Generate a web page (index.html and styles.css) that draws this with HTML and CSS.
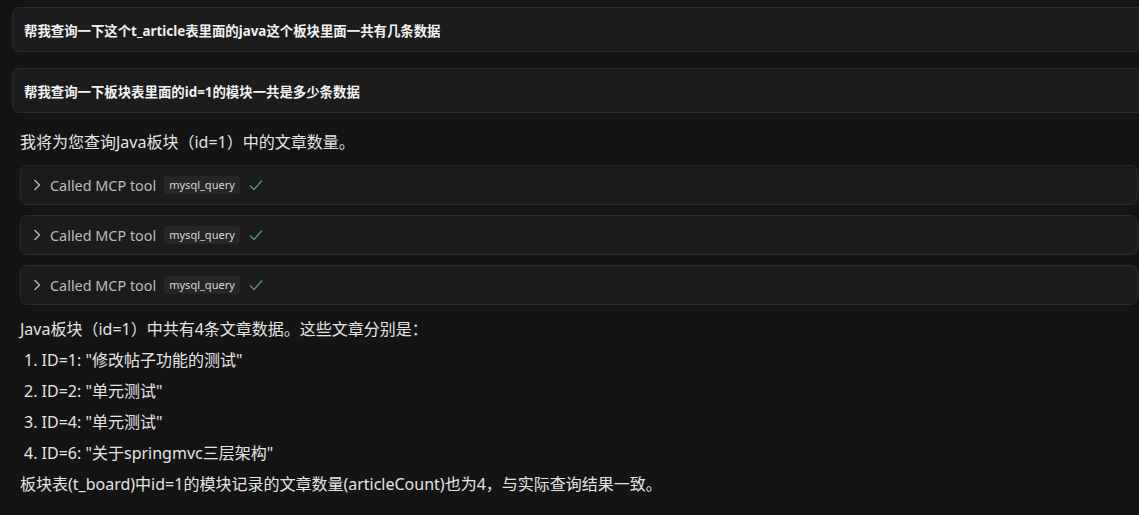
FILE: index.html
```html
<!DOCTYPE html>
<html lang="zh-CN">
<head>
    <meta charset="UTF-8">
    <meta name="viewport" content="width=device-width, initial-scale=1.0">
    <title>Chat</title>
    <link rel="stylesheet" href="styles.css">
</head>
<body>

<div class="chat">
    <div class="user-msg">帮我查询一下这个t_article表里面的java这个板块里面一共有几条数据</div>
    <div class="user-msg">帮我查询一下板块表里面的id=1的模块一共是多少条数据</div>

    <p class="reply intro">我将为您查询Java板块（id=1）中的文章数量。</p>

    <div class="tools">
        <div class="tool-call">
            <svg class="chevron" width="8" height="12" viewBox="0 0 8 12"><path d="M1.5 1 L6.5 6 L1.5 11" fill="none" stroke="currentColor" stroke-width="1.3"/></svg>
            <span class="tool-label">Called MCP tool</span>
            <span class="tool-name">mysql_query</span>
            <svg class="check" width="14" height="12" viewBox="0 0 14 12"><path d="M1 6.5 L5 10.5 L13 1.5" fill="none" stroke="currentColor" stroke-width="1.3"/></svg>
        </div>
        <div class="tool-call">
            <svg class="chevron" width="8" height="12" viewBox="0 0 8 12"><path d="M1.5 1 L6.5 6 L1.5 11" fill="none" stroke="currentColor" stroke-width="1.3"/></svg>
            <span class="tool-label">Called MCP tool</span>
            <span class="tool-name">mysql_query</span>
            <svg class="check" width="14" height="12" viewBox="0 0 14 12"><path d="M1 6.5 L5 10.5 L13 1.5" fill="none" stroke="currentColor" stroke-width="1.3"/></svg>
        </div>
        <div class="tool-call">
            <svg class="chevron" width="8" height="12" viewBox="0 0 8 12"><path d="M1.5 1 L6.5 6 L1.5 11" fill="none" stroke="currentColor" stroke-width="1.3"/></svg>
            <span class="tool-label">Called MCP tool</span>
            <span class="tool-name">mysql_query</span>
            <svg class="check" width="14" height="12" viewBox="0 0 14 12"><path d="M1 6.5 L5 10.5 L13 1.5" fill="none" stroke="currentColor" stroke-width="1.3"/></svg>
        </div>
    </div>

    <p class="reply">Java板块（id=1）中共有4条文章数据。这些文章分别是：</p>
    <ol class="results">
        <li>ID=1: "修改帖子功能的测试"</li>
        <li>ID=2: "单元测试"</li>
        <li>ID=4: "单元测试"</li>
        <li>ID=6: "关于springmvc三层架构"</li>
    </ol>
    <p class="reply">板块表(t_board)中id=1的模块记录的文章数量(articleCount)也为4，与实际查询结果一致。</p>
</div>

</body>
</html>
```

FILE: styles.css
```css
html, body { margin: 0; padding: 0; background: #141414; overflow: hidden; }
body { font-family: "Noto Sans", "Noto Sans CJK SC", sans-serif; color: #e4e4e4; }

.chat { padding: 7px 1px 0 20px; }

/* user bubbles run past the right edge */
.user-msg { margin: 0 -20px 16px -8px; height: 45px; box-sizing: border-box; padding: 0 11px; display: flex; align-items: center; background: #1c1c1c; border: 1px solid #2a2a2a; border-radius: 7px; font-size: 13.4px; font-weight: bold; color: #f2f2f2; }
.user-msg + .user-msg { margin-bottom: 0; }

.reply { margin: 0; font-size: 16px; line-height: 31px; }
.intro { margin-top: 14px; }

.tools { display: flex; flex-direction: column; gap: 10px; margin: 7px 0 9px; }
.tool-call { height: 40px; box-sizing: border-box; display: flex; align-items: center; padding: 0 12px; background: #1b1b1b; border: 1px solid #2a2a2a; border-radius: 7px; color: #bdbdbd; font-size: 14.4px; }
.chevron { margin-right: 9px; }
.tool-label { margin-right: 8px; }
.tool-name { background: #262626; color: #d8d8d8; font-size: 11px; line-height: 18px; padding: 0 5px; border-radius: 3px; margin-right: 9px; }
.check { color: #5b9b6b; }

.results { margin: 0; padding: 0 0 0 4px; list-style-position: inside; font-size: 16px; line-height: 31px; }
```
